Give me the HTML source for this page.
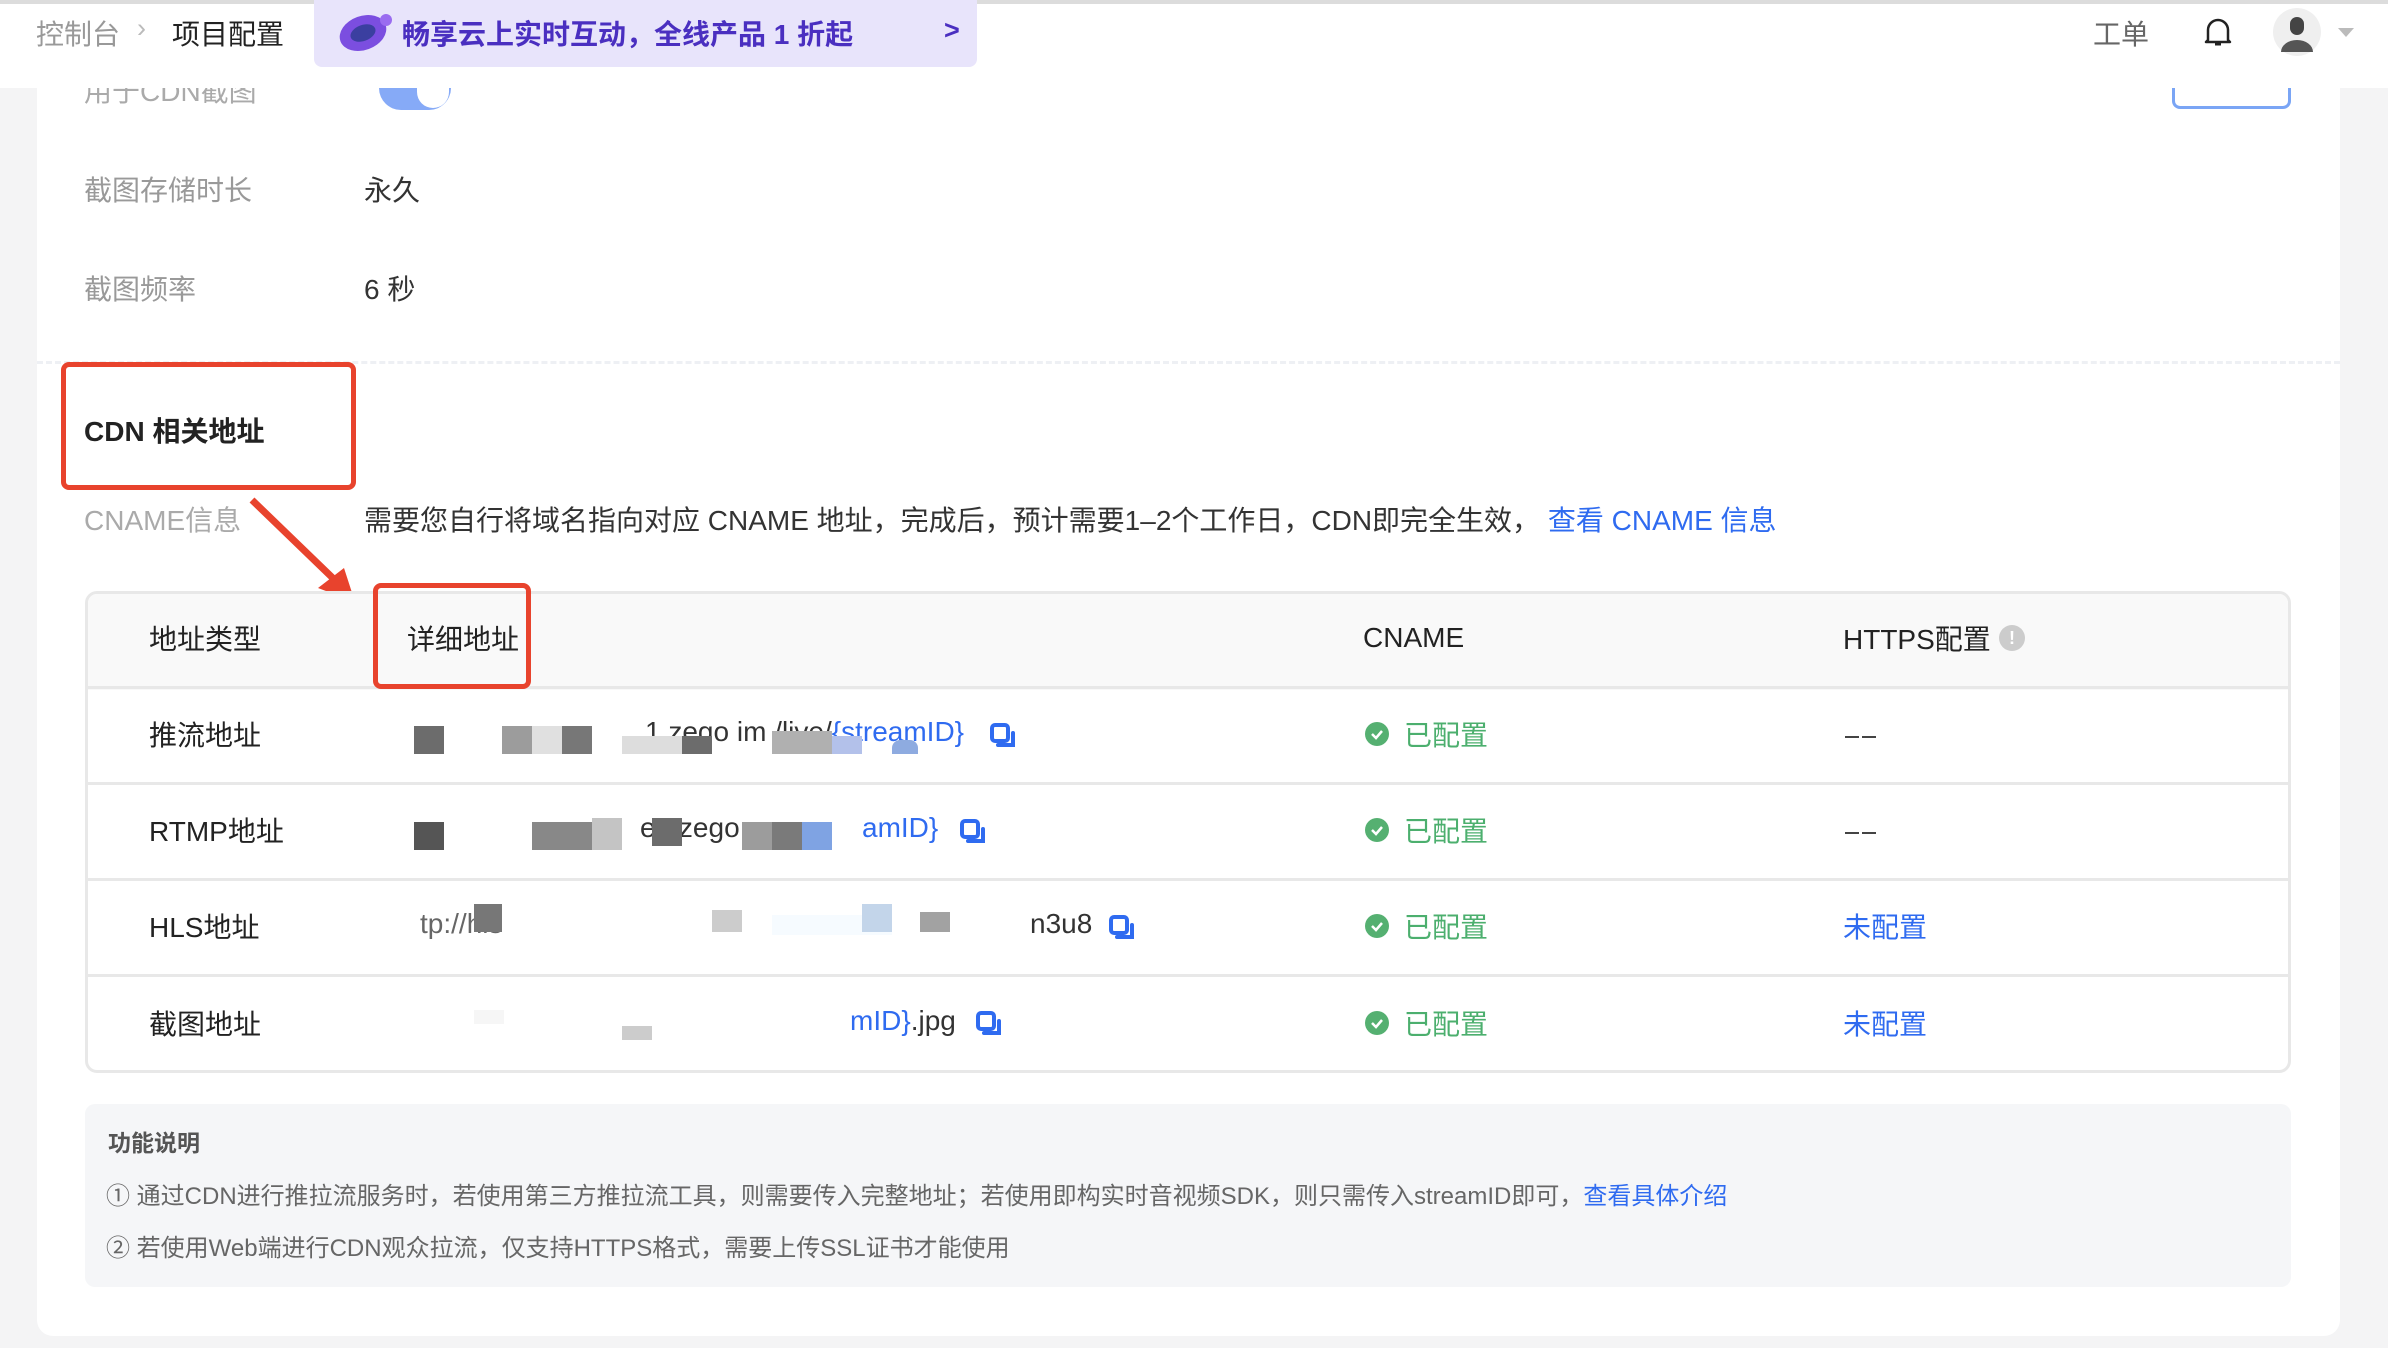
<!DOCTYPE html>
<html><head><meta charset="utf-8">
<style>
*{margin:0;padding:0;box-sizing:border-box}
body{width:2388px;height:1348px;background:#f4f4f5;font-family:"Liberation Sans","Noto Sans CJK SC",sans-serif;position:relative;overflow:hidden;color:#333}
.a{position:absolute;white-space:nowrap}
.card{position:absolute;left:37px;top:60px;width:2303px;height:1276px;background:#fff;border-radius:0 0 16px 16px}
.top{position:absolute;left:0;top:0;width:2388px;height:88px;background:#fff;border-top:4px solid #dcdcdc}
.lbl{font-size:28px;color:#999}
.val{font-size:28px;color:#333}
.th{font-size:28px;color:#222}
.row{position:absolute;left:85px;width:2206px;height:96px;border-top:3px solid #e8e8e8}
.blk{position:absolute;height:28px}
.g{color:#4caf6e;font-size:28px}
.bl{color:#2f6bf0}
.cp{position:absolute;width:26px;height:26px}
</style></head><body>
<div class="card"></div>
<div class="a" style="left:379px;top:66px;width:72px;height:44px;border-radius:22px;background:#86aaf7"></div>
<div class="a" style="left:417px;top:70px;width:32px;height:38px;border-radius:18px;background:#fff"></div>
<div class="a lbl" style="left:84px;top:70px;color:#aaa">用于CDN截图</div>
<div class="a" style="left:2172px;top:60px;width:119px;height:49px;border:3px solid #7aa5f5;border-top:none;border-radius:0 0 8px 8px"></div>

<div class="a lbl" style="left:84px;top:169px">截图存储时长</div>
<div class="a val" style="left:364px;top:169px">永久</div>
<div class="a lbl" style="left:84px;top:268px">截图频率</div>
<div class="a val" style="left:364px;top:268px">6 秒</div>
<div class="a" style="left:37px;top:361px;width:2303px;border-top:3px dashed #eef0f4"></div>

<div class="a" style="left:61px;top:362px;width:295px;height:128px;border:5px solid #e8432d;border-radius:8px"></div>
<div class="a" style="left:84px;top:410px;font-size:28px;font-weight:bold;color:#222">CDN 相关地址</div>

<div class="a lbl" style="left:84px;top:499px;color:#aaa">CNAME信息</div>
<div class="a val" style="left:364px;top:499px">需要您自行将域名指向对应 CNAME 地址，完成后，预计需要1–2个工作日，CDN即完全生效， <span class="bl">查看 CNAME 信息</span></div>

<svg class="a" style="left:240px;top:490px" width="130" height="120"><line x1="12" y1="10" x2="100" y2="95" stroke="#e8432d" stroke-width="7"/><polygon points="115,112 78,98 104,78" fill="#e8432d"/></svg>

<div class="a" style="left:85px;top:591px;width:2206px;height:482px;border:3px solid #e8e8e8;border-radius:12px;overflow:hidden">
<div style="height:96px;background:#f9f9f9"></div>
</div>
<div class="row" style="top:686px"></div>
<div class="row" style="top:782px"></div>
<div class="row" style="top:878px"></div>
<div class="row" style="top:974px"></div>
<div class="a th" style="left:149px;top:618px">地址类型</div>
<div class="a th" style="left:407px;top:618px">详细地址</div>
<div class="a th" style="left:1363px;top:622px">CNAME</div>
<div class="a th" style="left:1843px;top:618px">HTTPS配置</div>
<div class="a" style="left:1999px;top:625px;width:26px;height:26px;border-radius:50%;background:#ccc;color:#fff;font-size:18px;font-weight:bold;text-align:center;line-height:26px">!</div>
<div class="a" style="left:373px;top:583px;width:158px;height:106px;border:5px solid #e8432d;border-radius:8px"></div>

<div class="a th" style="left:149px;top:714px">推流地址</div>
<div class="a th" style="left:149px;top:810px">RTMP地址</div>
<div class="a th" style="left:149px;top:906px">HLS地址</div>
<div class="a th" style="left:149px;top:1003px">截图地址</div>

<div class="a val" style="left:645px;top:716px">1 zego im /live/<span class="bl">{streamID}</span></div>
<div class="blk a" style="left:414px;top:726px;width:30px;background:#6c6c6c"></div>
<div class="blk a" style="left:502px;top:726px;width:30px;background:#9c9c9c"></div>
<div class="blk a" style="left:532px;top:726px;width:30px;background:#e0e0e0"></div>
<div class="blk a" style="left:562px;top:726px;width:30px;background:#777"></div>
<div class="blk a" style="left:622px;top:736px;width:60px;height:18px;background:#ddd"></div>
<div class="blk a" style="left:682px;top:736px;width:30px;height:18px;background:#6c6c6c"></div>
<div class="blk a" style="left:772px;top:731px;width:60px;height:23px;background:#b0b0b0"></div>
<div class="blk a" style="left:832px;top:736px;width:30px;height:18px;background:#b3c1ea"></div>
<div class="blk a" style="left:892px;top:740px;width:26px;height:14px;background:#8eabe0;border-radius:8px 8px 0 0"></div>
<div class="a val" style="left:640px;top:812px">e1.zego..</div>
<div class="a val bl" style="left:862px;top:812px">amID}</div>
<div class="blk a" style="left:414px;top:822px;width:30px;background:#555"></div>
<div class="blk a" style="left:532px;top:822px;width:60px;background:#888"></div>
<div class="blk a" style="left:592px;top:818px;width:30px;height:32px;background:#c4c4c4"></div>
<div class="blk a" style="left:652px;top:818px;width:30px;background:#6c6c6c"></div>
<div class="blk a" style="left:742px;top:822px;width:30px;background:#9c9c9c"></div>
<div class="blk a" style="left:772px;top:822px;width:30px;background:#7a7a7a"></div>
<div class="blk a" style="left:802px;top:822px;width:30px;background:#7fa3e3"></div>
<div class="a val" style="left:1030px;top:908px">n3u8</div>
<div class="a val" style="left:420px;top:908px;color:#666">tp://hls</div>
<div class="blk a" style="left:474px;top:904px;width:28px;background:#777"></div>
<div class="blk a" style="left:712px;top:910px;width:30px;height:22px;background:#ccc"></div>
<div class="blk a" style="left:772px;top:915px;width:120px;height:20px;background:#f6fbff"></div>
<div class="blk a" style="left:862px;top:904px;width:30px;background:#c3d5ea"></div>
<div class="blk a" style="left:920px;top:912px;width:30px;height:20px;background:#a2a2a2"></div>
<div class="a val" style="left:850px;top:1005px"><span class="bl">mID}</span>.jpg</div>
<div class="blk a" style="left:622px;top:1026px;width:30px;height:14px;background:#ccc"></div>
<div class="blk a" style="left:474px;top:1010px;width:30px;height:14px;background:#f6f6f6"></div>

<svg class="cp a" style="left:990px;top:723px" viewBox="0 0 26 26"><rect x="2" y="2" width="16" height="16" rx="3" fill="none" stroke="#2f6bf0" stroke-width="4"/><path d="M23 10v12H8" fill="none" stroke="#2f6bf0" stroke-width="4" stroke-linecap="round"/></svg>
<svg class="cp a" style="left:960px;top:819px" viewBox="0 0 26 26"><rect x="2" y="2" width="16" height="16" rx="3" fill="none" stroke="#2f6bf0" stroke-width="4"/><path d="M23 10v12H8" fill="none" stroke="#2f6bf0" stroke-width="4" stroke-linecap="round"/></svg>
<svg class="cp a" style="left:1109px;top:915px" viewBox="0 0 26 26"><rect x="2" y="2" width="16" height="16" rx="3" fill="none" stroke="#2f6bf0" stroke-width="4"/><path d="M23 10v12H8" fill="none" stroke="#2f6bf0" stroke-width="4" stroke-linecap="round"/></svg>
<svg class="cp a" style="left:976px;top:1011px" viewBox="0 0 26 26"><rect x="2" y="2" width="16" height="16" rx="3" fill="none" stroke="#2f6bf0" stroke-width="4"/><path d="M23 10v12H8" fill="none" stroke="#2f6bf0" stroke-width="4" stroke-linecap="round"/></svg>

<svg class="a" style="left:1365px;top:722px" width="24" height="24"><circle cx="12" cy="12" r="12" fill="#55b071"/><path d="M7 12l4 4 6-7" stroke="#fff" stroke-width="2.5" fill="none"/></svg>
<div class="a g" style="left:1404px;top:714px">已配置</div>
<svg class="a" style="left:1365px;top:818px" width="24" height="24"><circle cx="12" cy="12" r="12" fill="#55b071"/><path d="M7 12l4 4 6-7" stroke="#fff" stroke-width="2.5" fill="none"/></svg>
<div class="a g" style="left:1404px;top:810px">已配置</div>
<svg class="a" style="left:1365px;top:914px" width="24" height="24"><circle cx="12" cy="12" r="12" fill="#55b071"/><path d="M7 12l4 4 6-7" stroke="#fff" stroke-width="2.5" fill="none"/></svg>
<div class="a g" style="left:1404px;top:906px">已配置</div>
<svg class="a" style="left:1365px;top:1011px" width="24" height="24"><circle cx="12" cy="12" r="12" fill="#55b071"/><path d="M7 12l4 4 6-7" stroke="#fff" stroke-width="2.5" fill="none"/></svg>
<div class="a g" style="left:1404px;top:1003px">已配置</div>
<div class="a" style="left:1845px;top:736px;width:14px;border-top:2px solid #444"></div>
<div class="a" style="left:1862px;top:736px;width:14px;border-top:2px solid #444"></div>
<div class="a" style="left:1845px;top:832px;width:14px;border-top:2px solid #444"></div>
<div class="a" style="left:1862px;top:832px;width:14px;border-top:2px solid #444"></div>
<div class="a bl" style="left:1843px;top:906px;font-size:28px">未配置</div>
<div class="a bl" style="left:1843px;top:1003px;font-size:28px">未配置</div>

<div class="a" style="left:85px;top:1104px;width:2206px;height:183px;background:#f5f6f8;border-radius:10px"></div>
<div class="a" style="left:108px;top:1124px;font-size:23px;font-weight:bold;color:#555">功能说明</div>
<div class="a" style="left:106px;top:1176px;font-size:24px;color:#666">① 通过CDN进行推拉流服务时，若使用第三方推拉流工具，则需要传入完整地址；若使用即构实时音视频SDK，则只需传入streamID即可，<span class="bl">查看具体介绍</span></div>
<div class="a" style="left:106px;top:1228px;font-size:24px;color:#666">② 若使用Web端进行CDN观众拉流，仅支持HTTPS格式，需要上传SSL证书才能使用</div>

<div class="top"></div>
<div class="a" style="left:36px;top:13px;font-size:28px;color:#999">控制台</div>
<div class="a" style="left:137px;top:13px;font-size:27px;color:#bbb">›</div>
<div class="a" style="left:172px;top:13px;font-size:28px;color:#222">项目配置</div>
<div class="a" style="left:314px;top:0;width:663px;height:67px;background:#e8e4fb;border-radius:0 0 8px 8px"></div>
<svg class="a" style="left:334px;top:8px" width="62" height="46"><ellipse cx="29" cy="25" rx="24" ry="17" fill="#7b4ee0" transform="rotate(-20 29 25)"/><ellipse cx="29" cy="25" rx="13" ry="8" fill="#3b3fa0" transform="rotate(-20 29 25)"/><circle cx="52" cy="12" r="6" fill="#9a6cf0"/></svg>
<div class="a" style="left:402px;top:13px;font-size:28px;font-weight:bold;color:#4a2fc0">畅享云上实时互动，全线产品 1 折起</div>
<div class="a" style="left:944px;top:15px;font-size:27px;font-weight:bold;color:#4a2fc0">&gt;</div>
<div class="a" style="left:2093px;top:13px;font-size:28px;color:#666">工单</div>
<svg class="a" style="left:2203px;top:16px" width="30" height="32" viewBox="0 0 30 32"><path d="M5 24V14a10 10 0 0 1 20 0v10l2 2H3z" fill="none" stroke="#222" stroke-width="2.5" stroke-linejoin="round"/><path d="M12 28h6" stroke="#222" stroke-width="3"/><path d="M15 3v2" stroke="#222" stroke-width="2.5"/></svg>
<svg class="a" style="left:2273px;top:8px" width="48" height="48"><circle cx="24" cy="24" r="24" fill="#efefef"/><rect x="17" y="9" width="14" height="18" rx="7" fill="#444"/><path d="M8 44a16 12 0 0 1 32 0z" fill="#555"/></svg>
<div class="a" style="left:2338px;top:28px;width:0;height:0;border-left:8px solid transparent;border-right:8px solid transparent;border-top:9px solid #bbb"></div>
</body></html>
